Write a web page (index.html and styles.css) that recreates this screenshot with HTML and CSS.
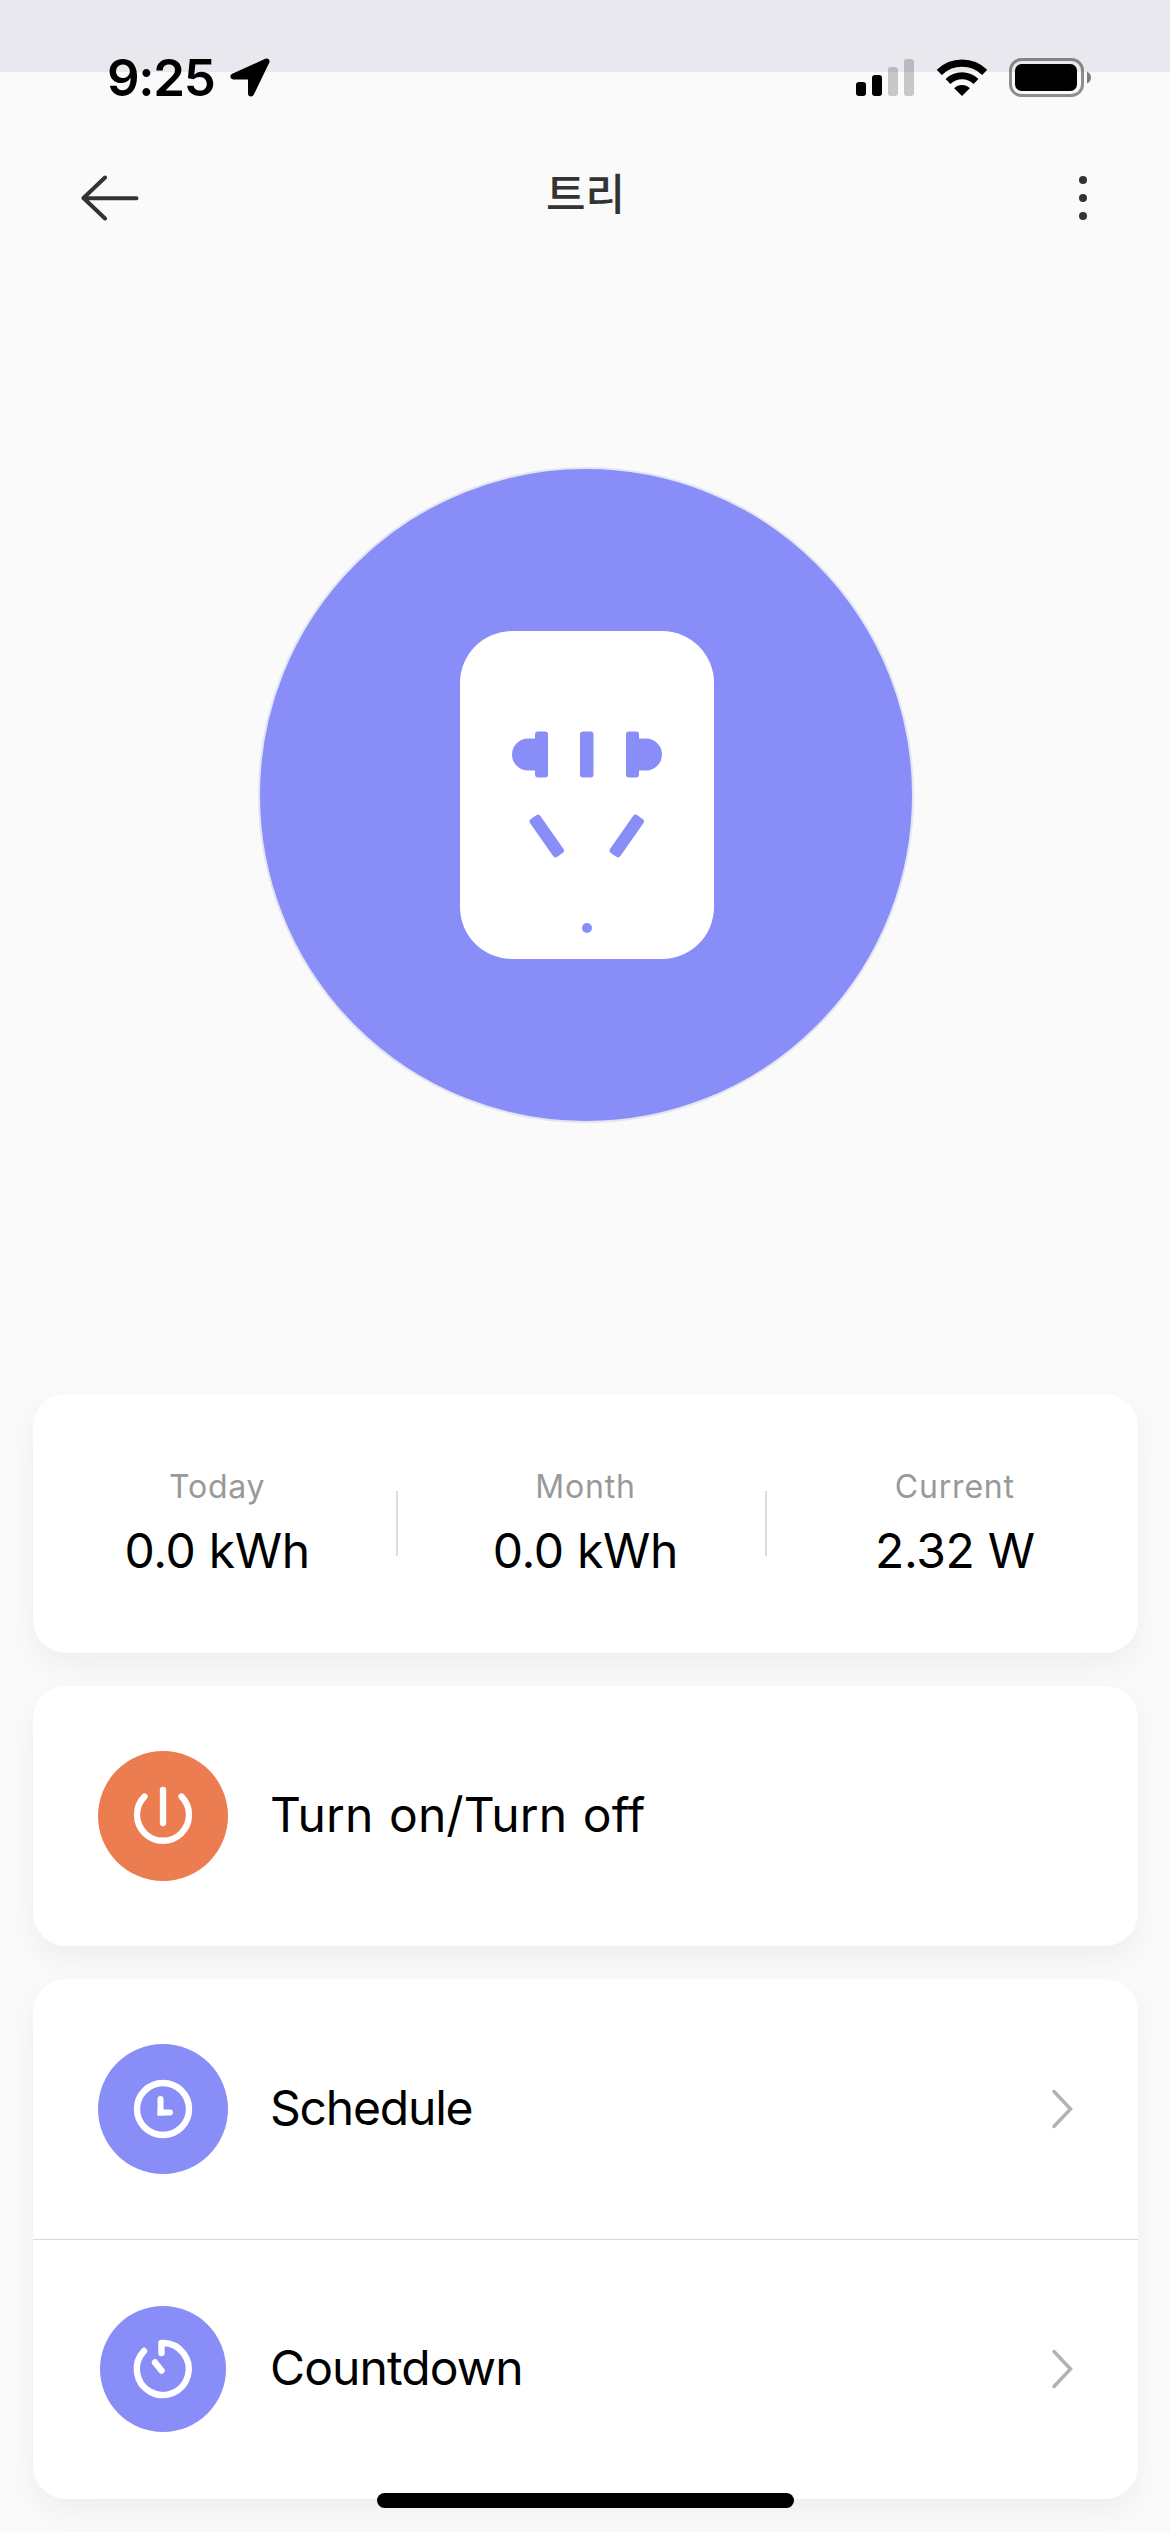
FILE: index.html
```html
<!DOCTYPE html>
<html lang="ko">
<head>
<meta charset="utf-8">
<title>트리</title>
<link rel="stylesheet" href="styles.css">
</head>
<body>
<div class="screen">
  <div class="status">
    <div class="status-left">
      <span class="time">9:25</span>
      <svg class="location" width="40" height="40" viewBox="0 0 40 40"><path d="M36.5 3.5 3.5 18.5h17.500v17z" fill="#000" stroke="#000" stroke-width="6" stroke-linejoin="round"/></svg>
    </div>
    <div class="status-right">
      <svg width="58" height="37" viewBox="0 0 58 37"><rect y="23" width="10" height="14" rx="3"/><rect x="16" y="16" width="10" height="21" rx="3"/><rect x="32" y="8" width="10" height="29" rx="3" opacity=".2"/><rect x="48" width="10" height="37" rx="3" opacity=".2"/></svg>
      <svg class="wifi" width="52" height="37" viewBox="0 0 52 37"><path d="M3.3 13.3a32.5 32.5 0 0 1 45.4 0" fill="none" stroke="#000" stroke-width="7.2"/><path d="M12 22.5a20 20 0 0 1 28 0" fill="none" stroke="#000" stroke-width="7"/><path d="M26 37 18.2 29.2a11 11 0 0 1 15.6 0z"/></svg>
      <svg class="battery" width="83" height="39" viewBox="0 0 83 39"><rect x="1.5" y="1.5" width="72" height="36" rx="11" fill="none" stroke="#000" stroke-opacity=".43" stroke-width="3"/><rect x="6" y="6" width="62" height="27" rx="6.5"/><path d="M78 13.500q4 2 4 6t-4 6z" opacity=".5"/></svg>
    </div>
  </div>
  <header class="nav">
    <svg width="58" height="46" viewBox="0 0 58 46"><path d="M24 2.500 2.500 23l21.500 20.500M2.500 23.200h53" fill="none" stroke="#333" stroke-width="4" stroke-linecap="round" stroke-linejoin="round"/></svg>
    <h1>트리</h1>
    <svg width="8" height="44" viewBox="0 0 8 44" fill="#333"><circle cx="4" cy="4" r="4"/><circle cx="4" cy="22" r="4"/><circle cx="4" cy="40" r="4"/></svg>
  </header>
  <main>
    <section class="hero">
      <div class="disc">
        <svg width="254" height="328" viewBox="0 0 254 328"><rect width="254" height="328" rx="52" fill="#fff"/><g fill="#888df8"><path d="M75 107.500H68a16 16 0 0 0 0 32h7zM178 107.500h8a16 16 0 0 1 0 32h-8z"/><rect x="75" y="100.500" width="13" height="46" rx="3"/><rect x="120" y="100.500" width="13.500" height="46" rx="3"/><rect x="166" y="100.500" width="13" height="46" rx="3"/><rect x="80.500" y="182" width="12.500" height="46" rx="3" transform="rotate(-35 86.750 205)"/><rect x="160.500" y="182" width="12.500" height="46" rx="3" transform="rotate(35 166.750 205)"/><circle cx="127" cy="297" r="5"/></g></svg>
      </div>
    </section>
    <section class="card stats">
      <div class="stat"><span class="label">Today</span><span class="value">0.0 kWh</span></div>
      <div class="stat"><span class="label">Month</span><span class="value">0.0 kWh</span></div>
      <div class="stat"><span class="label">Current</span><span class="value">2.32 W</span></div>
    </section>
    <section class="card">
      <div class="row">
        <svg class="icon" width="130" height="130" viewBox="0 0 130 130"><circle cx="65" cy="65" r="65" fill="#ec7d50"/><path d="M46.500 45.500a26 26 0 1 0 37 0M65 39v33" fill="none" stroke="#fff" stroke-width="6.300" stroke-linecap="round"/></svg>
        <span class="name power">Turn on/Turn off</span>
      </div>
    </section>
    <section class="card">
      <div class="row">
        <svg class="icon" width="130" height="130" viewBox="0 0 130 130"><circle cx="65" cy="65" r="65" fill="#888df8"/><circle cx="65" cy="65" r="26" fill="none" stroke="#fff" stroke-width="6.400"/><path d="M62.500 55v13.500h9.500" fill="none" stroke="#fff" stroke-width="6" stroke-linecap="round"/><path d="M59.500 66h6v5.500h-6z" fill="#fff"/></svg>
        <span class="name schedule">Schedule</span>
        <svg class="chevron" width="22" height="40" viewBox="0 0 22 40"><path d="m3 2.500 16.500 17.500L3 37.500" fill="none" stroke="#b2b2b2" stroke-width="3.500" stroke-linecap="round"/></svg>
      </div>
      <div class="row">
        <svg class="icon" width="130" height="130" viewBox="0 0 130 130"><circle cx="65" cy="65" r="63" fill="#888df8"/><path d="M46 47a26 26 0 1 0 19-8h-1.500v10M57 58.500l6.500 8" fill="none" stroke="#fff" stroke-width="6.400" stroke-linecap="round" stroke-linejoin="round"/></svg>
        <span class="name countdown">Countdown</span>
        <svg class="chevron" width="22" height="40" viewBox="0 0 22 40"><path d="m3 2.500 16.500 17.500L3 37.500" fill="none" stroke="#b2b2b2" stroke-width="3.500" stroke-linecap="round"/></svg>
      </div>
    </section>
  </main>
  <div class="home"></div>
</div>
</body>
</html>
```
FILE: styles.css
```css
* { box-sizing: border-box; }
body { margin: 0; background: #fafafa; color: #000; font-family: Inter, "Noto Sans CJK KR", sans-serif; }
svg { display: block; flex: none; }
.screen { position: relative; width: 1170px; height: 2532px; overflow: hidden; display: flex; flex-direction: column; background: #fafafa; }
.status { height: 141px; padding: 58px 78px 0 107px; display: flex; justify-content: space-between; background: linear-gradient(#e9e8ee 72px, transparent 72px); }
.status-left, .status-right { display: flex; align-items: flex-start; }
.status-right { padding-top: 1px; }
.time { font-size: 51px; line-height: 40px; font-weight: 600; letter-spacing: -1.3px; }
.location { margin: 0 0 0 15px; }
.wifi { margin-left: 22px; }
.battery { margin: -1px 0 0 21px; }
.nav { height: 114px; padding: 0 83px 0 81px; display: grid; grid-template-columns: 58px 1fr 8px; align-items: center; }
.nav h1 { margin: 0 0 14px; padding-right: 47px; text-align: center; color: #333; font-size: 43px; line-height: 60px; font-weight: 500; font-family: "Noto Sans CJK KR", sans-serif; }
main { padding: 0 32px 0 33px; }
.hero { height: 1139px; padding-top: 212px; display: flex; justify-content: center; align-items: flex-start; }
.disc { width: 656px; height: 656px; border-radius: 50%; background: #888df8; border: 2px solid #e2e5f3; display: flex; align-items: center; justify-content: center; padding-left: 2px; }
.card { margin-bottom: 33px; border-radius: 33px; background: #fff; box-shadow: 0 12px 30px rgba(0, 0, 0, .05); }
.stats { height: 259px; display: grid; grid-template-columns: repeat(3, 1fr); align-items: center; }
.stat { display: flex; flex-direction: column; align-items: center; position: relative; }
.stat + .stat::before { content: ""; position: absolute; left: -5px; top: 26px; width: 2px; height: 65px; background: #ddd; }
.stat:last-child { padding-left: 2px; }
.label { font-size: 32px; line-height: 44px; letter-spacing: .8px; color: #999; }
.value { margin-top: 10px; font-size: 48px; line-height: 64px; letter-spacing: -.3px; }
.row { height: 260px; padding: 0 65px; display: flex; align-items: center; }
.row + .row { border-top: 1px solid #d8d8d8; padding-bottom: 1px; }
.name { flex: 1; margin: 0 0 2px 42px; font-size: 48px; line-height: 64px; font-weight: 400; }
.power { letter-spacing: .1px; word-spacing: 2px; }
.schedule { letter-spacing: -1.2px; }
.countdown { letter-spacing: -.9px; }
.home { position: absolute; left: 377px; bottom: 24px; width: 417px; height: 15px; border-radius: 8px; background: #000; }
```
